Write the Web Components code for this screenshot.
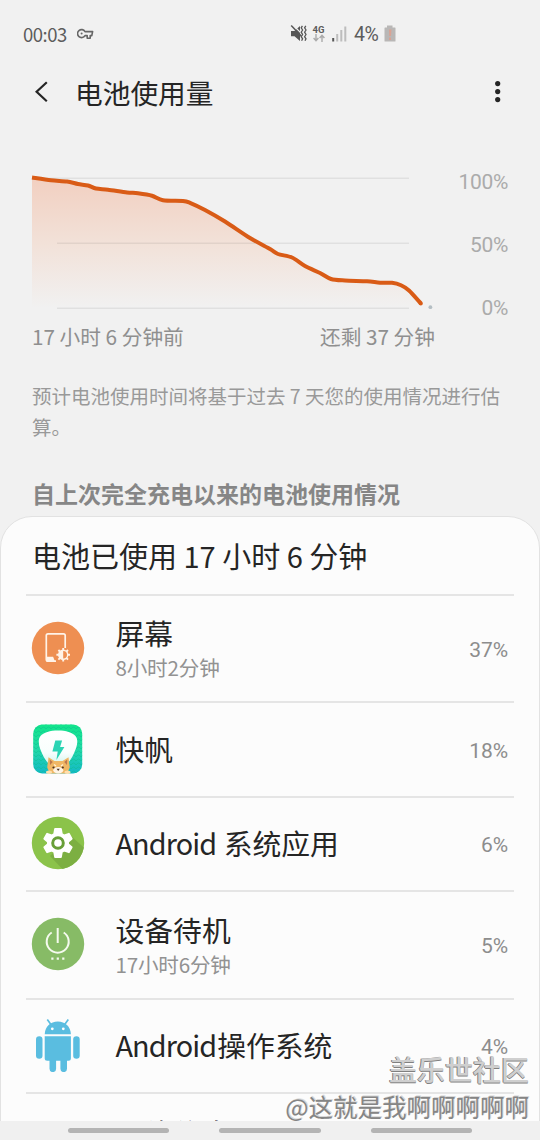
<!DOCTYPE html>
<html lang="zh-CN">
<head>
<meta charset="utf-8">
<title>电池使用量</title>
<style>
html,body{margin:0;background:#f1f1f1}
body{width:540px;height:1140px;overflow:hidden;font-family:"Noto Sans CJK SC",sans-serif}
</style>
</head>
<body>
<battery-page></battery-page>
<script>
const define=(name,html,setup)=>customElements.define(name,class extends HTMLElement{
  constructor(){
    super();
    const t=document.createElement('template');
    t.innerHTML=html;
    this.attachShadow({mode:'open'}).append(t.content.cloneNode(true));
  }
  connectedCallback(){ if(setup) setup(this,this.shadowRoot); }
});

define('status-bar',`<style>
:host{display:flex;align-items:center;height:68px;padding:0 144px 1px 23px;box-sizing:border-box;color:#5c5c5c;font-size:18.5px;line-height:24px}
.time{letter-spacing:-.5px;width:54px;white-space:nowrap}
.right{margin-left:auto;display:flex;align-items:center}
.net{display:flex;flex-direction:column;align-items:center;width:13px;margin:0 7px 0 5px;font:700 9.5px/9px Roboto,sans-serif}
.pct{font-family:Roboto,"Noto Sans CJK SC",sans-serif;font-size:19.5px;letter-spacing:-.5px;margin:2px 4px 0 7px;width:26px;white-space:nowrap}
svg{display:block}
</style>
<span class="time">00:03</span>
<svg width="17" height="12" viewBox="0 0 17 12" fill="none" stroke="#666" stroke-width="1.6" stroke-linejoin="round"><path d="M8 3.6A4 4 0 1 0 8 7.6h2.2v2.7h3V7.6h1.6l.8-4z"/><circle cx="4.6" cy="5.6" r="1" fill="#666" stroke="none"/></svg>
<div class="right">
<svg width="17" height="17" viewBox="0 0 17 17"><path d="M1 6h3.500L10 1v15l-5.500-4.700H1z" fill="#575757"/><path d="M2 -1l10 10" stroke="#f1f1f1" stroke-width="1.2"/><path d="M1.200 .5l10 10.600" stroke="#575757" stroke-width="1.500"/><path d="M12.400.8l-1.200 2 1.400 2.200-1.400 2.200 1.400 2.300-1.400 2.200 1.400 2.200-1 1.900M15.800.8l-1.200 2 1.400 2.200-1.400 2.200 1.400 2.300-1.400 2.200 1.400 2.200-1 1.900" fill="none" stroke="#575757" stroke-width="1.300"/></svg>
<div class="net"><span>4G</span><svg width="12" height="8" viewBox="0 0 12 8" fill="none" stroke="#aaa" stroke-width="1.4"><path d="M3 0v6.500M.6 4L3 6.700 5.400 4M9 8V1.300M6.600 4L9 1.300 11.400 4"/></svg></div>
<svg width="15" height="16" viewBox="0 0 15 16"><path d="M.2 12h2v3.500h-2z" fill="#575757"/><path d="M4.200 8h2v7.500h-2zM8.300 4h2v11.500h-2zM12.300.6h2v14.900h-2z" fill="#bdbdbd"/></svg>
<span class="pct">4%</span>
<svg width="12" height="17" viewBox="0 0 12 17"><path d="M3 .5h5.500v2H11q.5 0 .5.5v13q0 .5-.5.5H1q-.5 0-.5-.5V3q0-.5.5-.5h2z" fill="#b9b7b6"/><path d="M5 4.500h2.500L7 11H5.200zM5 12.500h2V15H5z" fill="#d9a394"/></svg>
</div>`);

define('title-bar',`<style>
:host{display:flex;align-items:center;height:50px;padding:0 38px 2px 34px;box-sizing:border-box;color:#252525}
h1{margin:0 auto 0 25px;font-weight:400;font-size:27.700px;line-height:40px}
</style>
<svg width="16" height="22" viewBox="0 0 16 22" fill="none" stroke="#252525" stroke-width="2.200"><path d="M12.800 1.300L2.600 10.800 12.800 20.300"/></svg>
<h1><slot></slot></h1>
<svg width="8" height="24" viewBox="0 0 8 24" fill="#252525"><circle cx="3.700" cy="3.600" r="2.600"/><circle cx="3.700" cy="11.600" r="2.600"/><circle cx="3.700" cy="19.600" r="2.600"/></svg>`);

define('usage-chart',`<style>
:host{display:block;padding-top:50px;color:#8f8f8f}
.plot{display:flex;height:150px}
.scale{display:flex;flex-direction:column;justify-content:space-between;align-items:flex-end;height:150px;width:72px;padding-top:2px;color:#ababab;font:21px/24px Roboto,sans-serif;letter-spacing:-.3px}
.range{display:flex;justify-content:space-between;padding:3px 105px 0 32px;font-size:20.700px;line-height:30px;height:30px;white-space:nowrap}
svg{display:block}
</style>
<div class="plot">
<svg width="436" height="150" viewBox="0 168 436 150">
<defs><linearGradient id="g" x1="0" y1="177" x2="0" y2="308" gradientUnits="userSpaceOnUse"><stop offset="0" stop-color="#f2cfc0"/><stop offset=".5" stop-color="#f2e1d8"/><stop offset="1" stop-color="#f1f1f1"/></linearGradient></defs>
<path id="a" fill="url(#g)"/>
<path d="M32 178.200H409M57 243.200H409M57 308.200H409" stroke="#000" stroke-opacity=".065" stroke-width="1.500"/>
<path id="l" fill="none" stroke="#d95b16" stroke-width="4"/>
<circle cx="420.800" cy="303.400" r="2" fill="#d95b16"/>
<circle cx="430.400" cy="307.200" r="1.900" fill="#b4bec3"/>
</svg>
<div class="scale"><span>100%</span><span>50%</span><span>0%</span></div>
</div>
<div class="range"><span>17 小时 6 分钟前</span><span>还剩 37 分钟</span></div>`,(h,r)=>{
  const p=[[32,177.5],[51,180.3],[67,181.5],[78,184],[88,185.5],[96,188.5],[108,189.7],[127,192.4],[138,193.3],[152,195.7],[163,200.3],[183,201],[190,202.8],[205,210],[225,221.5],[250,238],[270,249],[278,254],[292,257.5],[305,266],[320,273],[331,279],[345,280.5],[367,281.3],[380,282.7],[392,282.8],[401,285.3],[409,290.5],[421,303.6]];
  let d='M'+p[0];
  for(let i=0;i<p.length-1;i++){
    const a=p[i-1]||p[i],b=p[i],c=p[i+1],e=p[i+2]||c;
    d+='C'+[b[0]+(c[0]-a[0])/7,b[1]+(c[1]-a[1])/7,c[0]-(e[0]-b[0])/7,c[1]-(e[1]-b[1])/7,c[0],c[1]].join(' ');
  }
  r.getElementById('l').setAttribute('d',d);
  r.getElementById('a').setAttribute('d',d+'V308H32Z');
});

define('usage-note',`<style>
:host{display:block;padding:30px 36px 0 32px;color:#999;font-size:19.500px;line-height:30.500px;height:61px}
</style><slot></slot>`);

define('section-title',`<style>
:host{display:block;padding:0 32px;margin-top:34px;height:40px;color:#868686;font-weight:700;font-size:23px;line-height:34px;white-space:nowrap}
</style><slot></slot>`);

define('usage-card',`<style>
:host{display:block;box-sizing:border-box;width:540px;height:640px;border:1px solid #e2e2e2;border-radius:32px 32px 0 0;background:#fcfcfc;padding:0 25px}
h2{margin:0;padding-left:6px;height:77px;font-weight:400;font-size:29px;line-height:77px;color:#252525;white-space:nowrap}
</style><h2><slot name="heading"></slot></h2><slot></slot>`);

define('usage-row',`<style>
:host{display:flex;align-items:center;box-sizing:border-box;height:var(--h,94.500px);border-top:2px solid #e5e5e5;padding:0 6px 2px 5px}
.icon{width:54px;height:54px;flex:none}
.text{display:flex;flex-direction:column;margin-left:30.500px;flex:1;white-space:nowrap}
.name{font-size:28.800px;line-height:36px;color:#252525;margin:1px 0}
.sub{font-size:20.600px;line-height:28px;color:#929292;margin-top:1px;letter-spacing:-.2px}
.sub:empty{display:none}
.pct{font:21px/24px Roboto,sans-serif;color:#8d8d8d;letter-spacing:-.1px;position:relative;top:2px}
</style>
<div class="icon"><slot name="icon"></slot></div>
<div class="text"><div class="name"><slot></slot></div><div class="sub"></div></div>
<span class="pct"></span>`,(h,r)=>{
  r.querySelector('.sub').textContent=h.getAttribute('sub')||'';
  r.querySelector('.pct').textContent=h.getAttribute('value')||'';
});

const icons={
screen:`<circle cx="27" cy="27" r="26.200" fill="#ee8f52"/><path d="M34.200 27V14.500q0-1.700-1.700-1.700H17q-1.700 0-1.700 1.700v24q0 1.700 1.700 1.700h8" fill="none" stroke="#fff3e8" stroke-width="1.700"/><path d="M15.300 35.800h6.800l1.800 4.500H17q-1.700 0-1.700-1.700z" fill="#fff3e8"/><g stroke="#fff3e8" stroke-width="1.900"><path d="M32.200 27v13.600M25.400 33.800H39M27.400 29l9.600 9.600M37 29l-9.600 9.600"/></g><circle cx="32.200" cy="33.800" r="4.500" fill="#ee8f52" stroke="#fff3e8" stroke-width="1.400"/><path d="M32.200 29.300a4.500 4.500 0 0 0 0 9z" fill="#fff3e8"/>`,
sail:`<defs><linearGradient id="s" x2="0" y2="1"><stop stop-color="#12e68a"/><stop offset=".5" stop-color="#22d9a6"/><stop offset="1" stop-color="#15b8c8"/></linearGradient><linearGradient id="w" x2="0" y2="1"><stop stop-color="#fff"/><stop offset=".6" stop-color="#f8fefd"/><stop offset="1" stop-color="#c8f2e9"/></linearGradient><pattern id="p" width="5" height="4" patternUnits="userSpaceOnUse"><path d="M0 3q2.500-4 5 0" fill="none" stroke="#0bbf91" stroke-width=".7"/></pattern></defs>
<rect x="2.200" y="2.500" width="49" height="49" rx="9" fill="url(#s)"/><rect x="2.200" y="2.500" width="49" height="49" rx="9" fill="url(#p)" opacity=".8"/>
<path d="M27 8.500c8 0 14.500 2 17.500 5.500 2.600 3 2 8 .4 12.500C41.500 36 36 46 27 46S12.500 36 9 26.500C7.500 22 7 17 9.500 14 12.500 10.500 19 8.500 27 8.500z" fill="url(#w)"/>
<path d="M24.300 18.500h6.800l-2 6.500h4.300l-8 13 1.300-8.500h-5.300z" fill="#2bd4b4"/>
<path d="M17.500 35.200l6 3.800h8l6-3.800 1.300 10.300-2.800 6H19l-2.800-6z" fill="#f0b765"/><path d="M18.800 37.500l3 2.500-2.800 3zM36.200 37.500l-3 2.500 2.800 3z" fill="#bd7850"/><ellipse cx="27.300" cy="48.300" rx="5" ry="3.200" fill="#fff4e5"/><path d="M23 42.500l2 1.500M32 42.500l-2 1.500" stroke="#fff0d5" stroke-width="1.400"/><circle cx="22.500" cy="45.500" r="1.100" fill="#4a3327"/><circle cx="31.800" cy="45.500" r="1.100" fill="#4a3327"/><path d="M25.600 46.700h3.200l-1.600 2.200z" fill="#4a3327"/><ellipse cx="18" cy="50.300" rx="3" ry="1.700" fill="#ffdfae"/><ellipse cx="36.500" cy="50.300" rx="3" ry="1.700" fill="#ffdfae"/>`,
gear:`<clipPath id="c"><circle cx="27" cy="27" r="26.200"/></clipPath><circle cx="27" cy="27" r="26.200" fill="#8bc34a"/><path d="M40 20L60 38V60H38L19 40z" fill="#7caf42" clip-path="url(#c)"/><path fill="#fff" stroke="#fff" stroke-linejoin="round" stroke-width="2" transform="translate(27 27) scale(.89) translate(-27 -27.500)" d="M23.700 11.700h6.600l1 5.600 2.900 1.700 5-1.900 3.200 5.600-4 3.600v2.400l4 3.600-3.200 5.600-5-1.900-2.900 1.700-1 5.600h-6.600l-1-5.600-2.900-1.700-5 1.900-3.200-5.600 4-3.600v-2.400l-4-3.600 3.200-5.600 5 1.900 2.900-1.700z"/><circle cx="27" cy="27" r="5.300" fill="#fff" stroke="#689f38" stroke-width="3"/>`,
power:`<circle cx="27" cy="27" r="26.200" fill="#87bb66"/><path d="M20.700 15.500A11 11 0 1 0 32.700 15.500M26.700 11v15" fill="none" stroke="#f5faee" stroke-width="2"/><path d="M20.300 40.500h2.200v2.200h-2.200zM25.700 40.500h2.200v2.200h-2.200zM31.200 40.500h2.200v2.200h-2.200z" fill="#f5faee"/>`,
robot:`<g fill="#5abde0"><path d="M13.700 16.300C14 8.500 19.500 3.500 26.800 3.500S39.600 8.500 39.900 16.300z"/><path d="M13.700 18.300h26.200v22q0 2.500-2.500 2.500H36v8a3.300 3.300 0 0 1-6.600 0v-8h-4.300v8a3.300 3.300 0 0 1-6.600 0v-8h-2.300q-2.500 0-2.500-2.500z"/><rect x="5" y="18.200" width="6.500" height="22.500" rx="3.250"/><rect x="42.200" y="18.200" width="6.500" height="22.500" rx="3.250"/></g><path d="M16.300 1.500l4 5.500M37.300 1.500l-4 5.500" stroke="#5abde0" stroke-width="1.700"/><circle cx="21.300" cy="10.800" r="1.400" fill="#fff"/><circle cx="32.300" cy="10.800" r="1.400" fill="#fff"/>`
};
customElements.define('app-icon',class extends HTMLElement{
  connectedCallback(){
    if(this.shadowRoot) return;
    this.attachShadow({mode:'open'}).innerHTML='<style>:host{display:block}svg{display:block}</style><svg width="54" height="54" viewBox="0 0 54 54">'+icons[this.getAttribute('name')]+'</svg>';
  }
});

define('nav-bar',`<style>
:host{position:absolute;left:0;right:0;bottom:0;height:19.500px;background:#f0f0f0;display:flex;gap:50px;padding-left:68px;align-items:center;box-sizing:border-box}
i{width:101.300px;height:4.500px;border-radius:3px;background:#b4b4b4}
</style><i></i><i></i><i></i>`);

define('forum-mark',`<style>
:host{position:absolute;right:11px;bottom:15px;display:flex;flex-direction:column;align-items:flex-end;white-space:nowrap}
.a{font-size:28px;line-height:37px;font-weight:500;color:#cfcfcf;text-shadow:-1px 0 0 #808080,0 1px 0 #808080}
.b{font-size:24.500px;line-height:37px;color:#858585;text-shadow:1px -1px 0 #d8d8d8}
</style><span class="a">盖乐世社区</span><span class="b">@这就是我啊啊啊啊啊</span>`);

define('battery-page',`<style>
:host{display:block;position:relative;width:540px;height:1140px;overflow:hidden;background:#f1f1f1}
.la{letter-spacing:-.9px;margin-right:1px}
</style>
<status-bar></status-bar>
<title-bar>电池使用量</title-bar>
<usage-chart></usage-chart>
<usage-note>预计电池使用时间将基于过去 7 天您的使用情况进行估算。</usage-note>
<section-title>自上次完全充电以来的电池使用情况</section-title>
<usage-card>
<span slot="heading">电池已使用 17 小时 6 分钟</span>
<usage-row style="--h:107px" sub="8小时2分钟" value="37%"><app-icon slot="icon" name="screen"></app-icon>屏幕</usage-row>
<usage-row style="--h:95px" value="18%"><app-icon slot="icon" name="sail"></app-icon>快帆</usage-row>
<usage-row style="--h:94px" value="6%"><app-icon slot="icon" name="gear"></app-icon><span class="la">Android</span> 系统应用</usage-row>
<usage-row style="--h:108px" sub="17小时6分钟" value="5%"><app-icon slot="icon" name="power"></app-icon>设备待机</usage-row>
<usage-row style="--h:94px" value="4%"><app-icon slot="icon" name="robot"></app-icon><span class="la">Android</span>操作系统</usage-row>
<usage-row style="--h:110px" sub="&nbsp;">联络信息</usage-row>
</usage-card>
<nav-bar></nav-bar>
<forum-mark></forum-mark>`);
</script>
</body>
</html>
